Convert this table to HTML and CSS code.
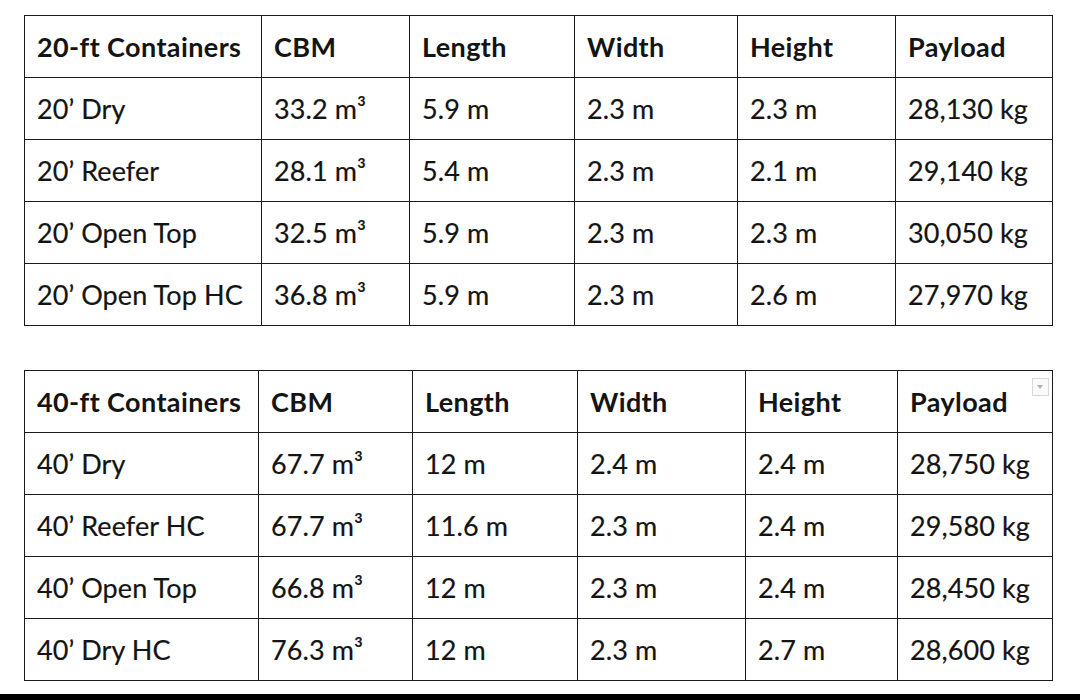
FILE: index.html
```html
<!DOCTYPE html>
<html>
<head>
<meta charset="utf-8">
<link rel="stylesheet" href="styles.css">
</head>
<body>
<div class="page">
  <table class="spec t20">
    <colgroup>
      <col class="c1"><col class="c2"><col class="c3"><col class="c4"><col class="c5"><col class="c6">
    </colgroup>
    <thead>
      <tr><th>20-ft Containers</th><th>CBM</th><th>Length</th><th>Width</th><th>Height</th><th>Payload</th></tr>
    </thead>
    <tbody>
      <tr><td>20’ Dry</td><td>33.2 m³</td><td>5.9 m</td><td>2.3 m</td><td>2.3 m</td><td>28,130 kg</td></tr>
      <tr><td>20’ Reefer</td><td>28.1 m³</td><td>5.4 m</td><td>2.3 m</td><td>2.1 m</td><td>29,140 kg</td></tr>
      <tr><td>20’ Open Top</td><td>32.5 m³</td><td>5.9 m</td><td>2.3 m</td><td>2.3 m</td><td>30,050 kg</td></tr>
      <tr><td>20’ Open Top HC</td><td>36.8 m³</td><td>5.9 m</td><td>2.3 m</td><td>2.6 m</td><td>27,970 kg</td></tr>
    </tbody>
  </table>

  <table class="spec t40">
    <colgroup>
      <col class="c1"><col class="c2"><col class="c3"><col class="c4"><col class="c5"><col class="c6">
    </colgroup>
    <thead>
      <tr><th>40-ft Containers</th><th>CBM</th><th>Length</th><th>Width</th><th>Height</th><th class="last-head">Payload<span class="drop"></span></th></tr>
    </thead>
    <tbody>
      <tr><td>40’ Dry</td><td>67.7 m³</td><td>12 m</td><td>2.4 m</td><td>2.4 m</td><td>28,750 kg</td></tr>
      <tr><td>40’ Reefer HC</td><td>67.7 m³</td><td>11.6 m</td><td>2.3 m</td><td>2.4 m</td><td>29,580 kg</td></tr>
      <tr><td>40’ Open Top</td><td>66.8 m³</td><td>12 m</td><td>2.3 m</td><td>2.4 m</td><td>28,450 kg</td></tr>
      <tr><td>40’ Dry HC</td><td>76.3 m³</td><td>12 m</td><td>2.3 m</td><td>2.7 m</td><td>28,600 kg</td></tr>
    </tbody>
  </table>
</div>
<div class="bottom-bar"></div>
</body>
</html>
```

FILE: styles.css
```css
html, body {
  margin: 0;
  padding: 0;
  background: #ffffff;
}

body {
  width: 1080px;
  height: 700px;
  overflow: hidden;
  display: flex;
  flex-direction: column;
  font-family: "Lato", "Open Sans", "Liberation Sans", sans-serif;
  color: #141414;
}

.page {
  flex: 1;
  padding: 15px 0 0 24px;
  display: flex;
  flex-direction: column;
  gap: 44px;
}

.spec {
  border-collapse: collapse;
  table-layout: fixed;
  width: 1028px;
}

.spec th,
.spec td {
  border: 1.5px solid #1a1a1a;
  height: 62px;
  padding: 0 0 0 12px;
  text-align: left;
  vertical-align: middle;
  font-size: 27px;
  white-space: nowrap;
  box-sizing: border-box;
}

.spec th {
  font-weight: 700;
  letter-spacing: 0.4px;
}

.spec td {
  font-weight: 400;
  letter-spacing: 0.1px;
  -webkit-text-stroke: 0.2px #141414;
}

.t20 .c1 { width: 237px; }
.t20 .c2 { width: 148px; }
.t20 .c3 { width: 165px; }
.t20 .c4 { width: 163px; }
.t20 .c5 { width: 158px; }
.t20 .c6 { width: 157px; }

.t40 .c1 { width: 234px; }
.t40 .c2 { width: 154px; }
.t40 .c3 { width: 165px; }
.t40 .c4 { width: 168px; }
.t40 .c5 { width: 152px; }
.t40 .c6 { width: 155px; }

.last-head {
  position: relative;
}

.drop {
  position: absolute;
  right: 3px;
  top: 7px;
  width: 17px;
  height: 18px;
  border: 1px solid #d8d8d8;
  background: #fafafa;
  box-sizing: border-box;
}

.drop::after {
  content: "";
  position: absolute;
  left: 4px;
  top: 6px;
  border-left: 3.5px solid transparent;
  border-right: 3.5px solid transparent;
  border-top: 4px solid #b0b0b0;
}

.bottom-bar {
  height: 6px;
  background: #000000;
  flex: none;
}
```
